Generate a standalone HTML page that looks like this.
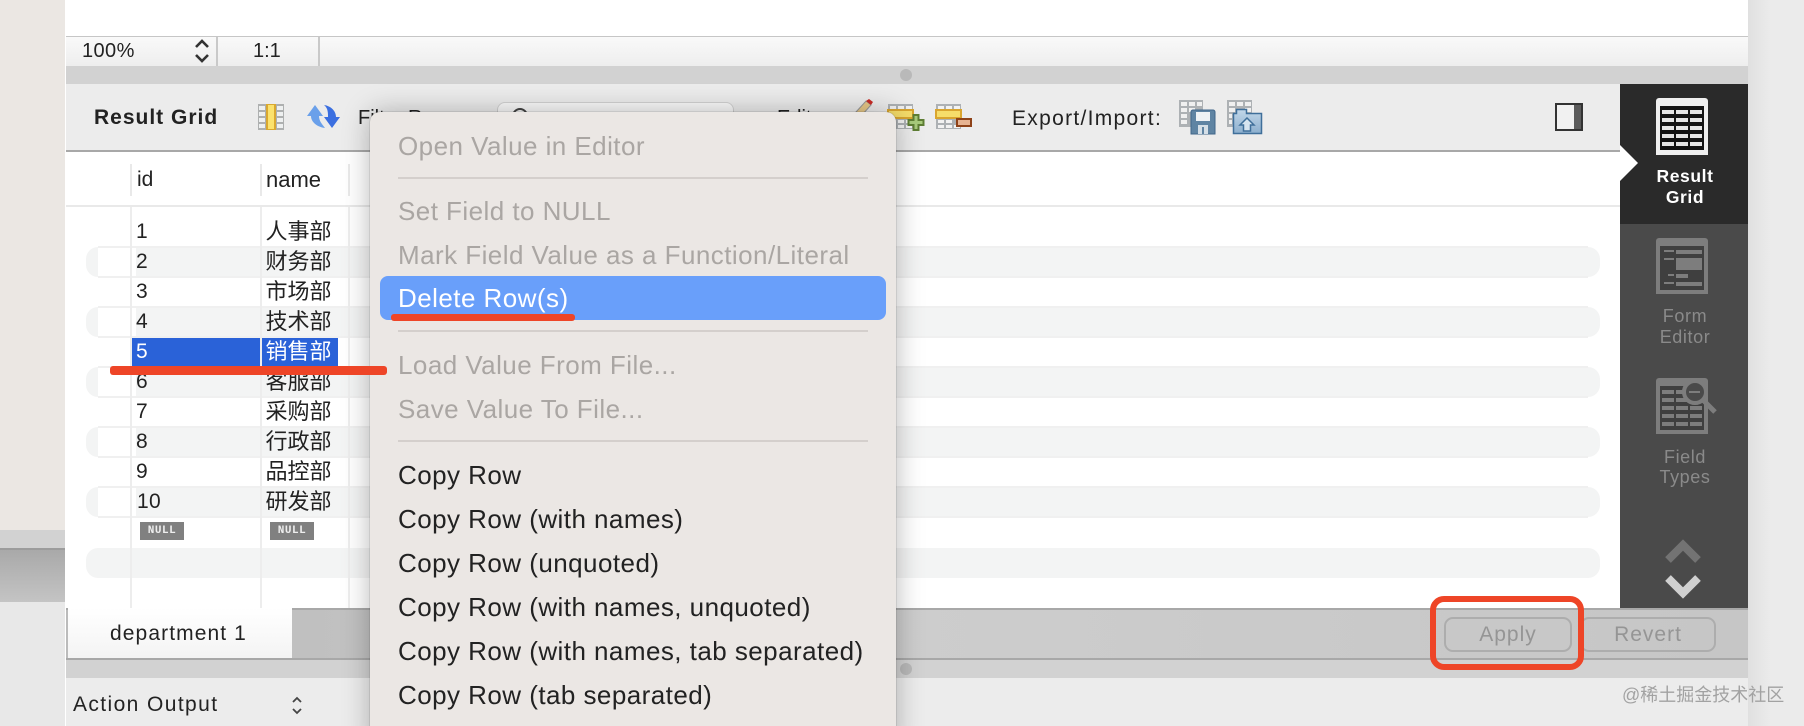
<!DOCTYPE html>
<html><head><meta charset="utf-8">
<style>
html,body{margin:0;padding:0;background:#fff}
#p{position:relative;width:1804px;height:726px;overflow:hidden;background:#fff;font-family:"Liberation Sans","Noto Sans CJK SC",sans-serif;color:#222}
#p div{position:absolute}
.t{white-space:nowrap;line-height:30px;height:30px}
.c{font-size:21px;letter-spacing:.3px}
.z{font-size:22px}
.st{left:86px;width:1514px;height:30px;background:#f3f4f4;border-radius:12px}
.ln{left:98px;width:1490px;height:2px;background:#f0f0f0}
.wb{left:98px;width:38px;height:30px;background:#fff}
.m{left:398px;font-size:26px;color:#222;letter-spacing:.45px}
.d{color:#aaa6a3}
.sp{left:398px;width:470px;height:2px;background:#d4cfcc}
.s{font-size:18px;line-height:20px;height:20px;text-align:center;left:1640px;width:90px;letter-spacing:.6px;color:#8a8a8a;white-space:nowrap}
.nl{width:44px;height:18px;top:522px;background:#808080;color:#eee;font:bold 11px/18px "Liberation Mono",monospace;text-align:center;letter-spacing:.5px}
</style></head><body><div id="p">
<!-- outer left -->
<div style="left:0;top:0;width:65px;height:530px;background:#ebe7e3"></div>
<div style="left:0;top:530px;width:65px;height:18px;background:#d2d2d2"></div>
<div style="left:0;top:548px;width:65px;height:54px;background:linear-gradient(#a9a9a9,#c4c4c4);border-top:2px solid #9c9c9c;box-sizing:border-box"></div>
<div style="left:0;top:602px;width:65px;height:124px;background:#e8e8e8"></div>
<!-- right -->
<div style="left:1748px;top:0;width:56px;height:726px;background:linear-gradient(90deg,#e0e0e0,#ebebeb 40%)"></div>
<!-- status -->
<div style="left:66px;top:36px;width:1682px;height:30px;background:linear-gradient(#f9f9f9,#eeeeee);border-top:1px solid #c6c6c6;box-sizing:border-box"></div>
<div class="t" style="left:82px;top:36px;font-size:20px;letter-spacing:.4px">100%</div>
<div style="left:216px;top:37px;width:2px;height:29px;background:#c9c9c9"></div>
<div style="left:318px;top:37px;width:2px;height:29px;background:#c9c9c9"></div>
<div class="t" style="left:253px;top:36px;font-size:20px">1:1</div>
<!-- band -->
<div style="left:66px;top:66px;width:1682px;height:18px;background:#d2d2d2"></div>
<div style="left:900px;top:69px;width:12px;height:12px;border-radius:50%;background:#b9b9b9"></div>
<!-- toolbar -->
<div style="left:66px;top:84px;width:1554px;height:68px;background:#ececec;border-bottom:2px solid #a8a8a8;box-sizing:border-box"></div>
<div class="t" style="left:94px;top:103px;font-size:21px;font-weight:bold;letter-spacing:1px">Result Grid</div>
<div class="t" style="left:358px;top:103px;font-size:20px">Filter Rows:</div>
<div style="left:497px;top:102px;width:237px;height:30px;background:#fbfbfb;border:1px solid #d2d2d2;border-radius:8px;box-sizing:border-box"></div>
<div class="t" style="left:777px;top:103px;font-size:20px">Edit:</div>
<div class="t" style="left:1012px;top:104px;font-size:21px;letter-spacing:1.3px">Export/Import:</div>
<!-- grid -->
<div style="left:66px;top:152px;width:1554px;height:456px;background:#fff"></div>
<div style="left:66px;top:205px;width:1554px;height:2px;background:#e9e9e9"></div>
<div class="st" style="top:247px"></div><div class="st" style="top:307px"></div><div class="st" style="top:367px"></div><div class="st" style="top:427px"></div><div class="st" style="top:487px"></div>
<div class="st" style="top:548px"></div>
<div class="ln" style="top:246px"></div><div class="ln" style="top:276px"></div>
<div class="ln" style="top:306px"></div><div class="ln" style="top:336px"></div>
<div class="ln" style="top:366px"></div><div class="ln" style="top:396px"></div>
<div class="ln" style="top:426px"></div><div class="ln" style="top:456px"></div>
<div class="ln" style="top:486px"></div><div class="ln" style="top:516px"></div>
<div class="wb" style="top:248px;height:28px"></div><div class="wb" style="top:308px;height:28px"></div><div class="wb" style="top:368px;height:28px"></div><div class="wb" style="top:428px;height:28px"></div><div class="wb" style="top:488px;height:28px"></div>
<div style="left:130px;top:164px;width:2px;height:32px;background:#e9e9e9"></div>
<div style="left:260px;top:164px;width:2px;height:32px;background:#e9e9e9"></div>
<div style="left:348px;top:164px;width:2px;height:32px;background:#e9e9e9"></div>
<div style="left:130px;top:207px;width:2px;height:401px;background:#ededed"></div>
<div style="left:260px;top:207px;width:2px;height:401px;background:#ededed"></div>
<div style="left:348px;top:207px;width:2px;height:401px;background:#ededed"></div>
<div class="t" style="left:137px;top:165px;font-size:21px">id</div>
<div class="t" style="left:266px;top:165px;font-size:22px">name</div>
<div style="left:132px;top:338px;width:128px;height:28px;background:#2a62d8"></div>
<div style="left:262px;top:338px;width:76px;height:28px;background:#2a62d8"></div>
<div class="t c" style="left:136px;top:217px">1</div><div class="t z" style="left:265.5px;top:217px">人事部</div>
<div class="t c" style="left:136px;top:247px">2</div><div class="t z" style="left:265.5px;top:247px">财务部</div>
<div class="t c" style="left:136px;top:277px">3</div><div class="t z" style="left:265.5px;top:277px">市场部</div>
<div class="t c" style="left:136px;top:307px">4</div><div class="t z" style="left:265.5px;top:307px">技术部</div>
<div class="t c" style="left:136px;top:337px;color:#fff">5</div><div class="t z" style="left:265.5px;top:337px;color:#fff">销售部</div>
<div class="t c" style="left:136px;top:367px">6</div><div class="t z" style="left:265.5px;top:367px">客服部</div>
<div class="t c" style="left:136px;top:397px">7</div><div class="t z" style="left:265.5px;top:397px">采购部</div>
<div class="t c" style="left:136px;top:427px">8</div><div class="t z" style="left:265.5px;top:427px">行政部</div>
<div class="t c" style="left:136px;top:457px">9</div><div class="t z" style="left:265.5px;top:457px">品控部</div>
<div class="t c" style="left:137px;top:487px">10</div><div class="t z" style="left:265.5px;top:487px">研发部</div>
<div class="nl" style="left:140px">NULL</div><div class="nl" style="left:270px">NULL</div>
<!-- tabs -->
<div style="left:66px;top:608px;width:1682px;height:52px;background:linear-gradient(90deg,#bbb,#cdcdcd 50%,#c6c6c6);border-top:2px solid #a8a8a8;border-bottom:2px solid #a8a8a8;box-sizing:border-box"></div>
<div style="left:68px;top:608px;width:224px;height:50px;background:linear-gradient(#fff,#f4f4f4)"></div>
<div class="t" style="left:110px;top:619px;font-size:21px;letter-spacing:1.1px">department 1</div>
<div style="left:1444px;top:617px;width:128px;height:35px;border:2px solid #adadad;border-radius:9px;box-sizing:border-box;text-align:center;font-size:21px;line-height:31px;color:#959595;letter-spacing:1px">Apply</div>
<div style="left:1580px;top:617px;width:136px;height:35px;border:2px solid #adadad;border-radius:9px;box-sizing:border-box;text-align:center;font-size:21px;line-height:31px;color:#959595;letter-spacing:1px">Revert</div>
<!-- lower -->
<div style="left:66px;top:660px;width:1682px;height:18px;background:#d2d2d2"></div>
<div style="left:900px;top:663px;width:12px;height:12px;border-radius:50%;background:#b9b9b9"></div>
<div style="left:66px;top:678px;width:1682px;height:48px;background:#ececec"></div>
<div class="t" style="left:73px;top:690px;font-size:21px;letter-spacing:1.4px">Action Output</div>
<!-- sidebar -->
<div style="left:1620px;top:84px;width:128px;height:140px;background:#2a2a2a"></div>
<div style="left:1620px;top:224px;width:128px;height:384px;background:#4a4a4a"></div>
<div class="s" style="top:166px;color:#fff;font-weight:bold;font-size:17.5px">Result</div>
<div class="s" style="top:187px;color:#fff;font-weight:bold;font-size:17.5px">Grid</div>
<div class="s" style="top:306px">Form</div>
<div class="s" style="top:327px">Editor</div>
<div class="s" style="top:447px">Field</div>
<div class="s" style="top:467px">Types</div>
<svg style="position:absolute;left:0;top:0" width="1804" height="726" viewBox="0 0 1804 726">
<defs><linearGradient id="fg" x1="0" y1="0" x2="0" y2="1"><stop offset="0" stop-color="#c2d7e9"/><stop offset="1" stop-color="#8cafce"/></linearGradient></defs>
<!-- stepper status -->
<path d="M196 47l6-6 6 6M196 55l6 6 6-6" fill="none" stroke="#333" stroke-width="2.6"/>
<!-- action stepper -->
<path d="M293 702l4-4 4 4M293 709l4 4 4-4" fill="none" stroke="#444" stroke-width="1.8"/>
<!-- column icon -->
<rect x="258" y="104" width="26" height="26" fill="#aeb0b0"/>
<g fill="#eef0f0"><rect x="259" y="106" width="6" height="4"/><rect x="259" y="112" width="6" height="4"/><rect x="259" y="118" width="6" height="4"/><rect x="259" y="124" width="6" height="4"/><rect x="277" y="106" width="6" height="4"/><rect x="277" y="112" width="6" height="4"/><rect x="277" y="118" width="6" height="4"/><rect x="277" y="124" width="6" height="4"/></g>
<rect x="266" y="104" width="10" height="26" fill="#d9a830"/><rect x="268" y="105" width="6" height="24" fill="#fbe26d"/>
<!-- refresh -->
<path d="M315 105L307 116h4c0 6 6 11 14 12-3-4-6-7-6-12h4z" fill="#6aa0ea"/>
<path d="M332 128l8-11h-4c0-6-5-11-12-12 4 3 4 8 4 12h-4z" fill="#3b6fe0"/>
<!-- search top -->
<circle cx="520" cy="116" r="7" fill="none" stroke="#444" stroke-width="2"/>
<!-- pencil -->
<path d="M856 112l10-11 5 4-9 10z" fill="#e9c988" stroke="#999"/><path d="M866 101l3-2 4 3-2 3z" fill="#c92b25"/>
<!-- add row -->
<g><rect x="888" y="104" width="25" height="25" fill="#adb1b4"/><g fill="#f2f2f2"><rect x="890" y="106" width="6" height="3"/><rect x="898" y="106" width="6" height="3"/><rect x="906" y="106" width="6" height="3"/><rect x="890" y="120" width="6" height="3"/><rect x="898" y="120" width="6" height="3"/><rect x="906" y="120" width="6" height="3"/><rect x="890" y="125" width="6" height="3"/><rect x="898" y="125" width="6" height="3"/><rect x="906" y="125" width="6" height="3"/></g><rect x="888" y="110" width="25" height="8" fill="#f6dd6a" stroke="#d9a52f" stroke-width="2"/><path d="M913.5 115h5v5h5v5h-5v5h-5v-5h-5v-5h5z" fill="#a8cb7c" stroke="#5e7e34" stroke-width="2"/></g>
<g><rect x="936" y="104" width="25" height="25" fill="#adb1b4"/><g fill="#f2f2f2"><rect x="938" y="106" width="6" height="3"/><rect x="946" y="106" width="6" height="3"/><rect x="954" y="106" width="6" height="3"/><rect x="938" y="120" width="6" height="3"/><rect x="946" y="120" width="6" height="3"/><rect x="938" y="125" width="6" height="3"/><rect x="946" y="125" width="6" height="3"/><rect x="954" y="125" width="6" height="3"/></g><rect x="936" y="110" width="25" height="8" fill="#f6dd6a" stroke="#d9a52f" stroke-width="2"/><rect x="957" y="119" width="14" height="7" fill="#e7b391" stroke="#8e4218" stroke-width="2"/></g>
<!-- export -->
<g><rect x="1179" y="100" width="24" height="27" fill="#adb1b4"/><g fill="#f0f0f0"><rect x="1181" y="102" width="6" height="4"/><rect x="1189" y="102" width="6" height="4"/><rect x="1197" y="102" width="5" height="4"/><rect x="1181" y="108" width="6" height="4"/><rect x="1189" y="108" width="6" height="4"/><rect x="1181" y="114" width="6" height="4"/><rect x="1181" y="120" width="6" height="4"/></g><path d="M1191 112a2 2 0 0 1 2-2h20a2 2 0 0 1 2 2v22h-24z" fill="#5f84a3" stroke="#41668a"/><rect x="1196" y="112" width="14" height="9" fill="#eef2f5"/><rect x="1198" y="125" width="10" height="9" fill="#d5dfe7"/><rect x="1202" y="127" width="2" height="7" fill="#5f84a3"/></g>
<g><rect x="1227" y="100" width="25" height="27" fill="#adb1b4"/><g fill="#f0f0f0"><rect x="1229" y="102" width="6" height="4"/><rect x="1237" y="102" width="6" height="4"/><rect x="1245" y="102" width="6" height="4"/><rect x="1229" y="108" width="6" height="4"/><rect x="1245" y="108" width="6" height="4"/><rect x="1229" y="114" width="3" height="4"/><rect x="1229" y="120" width="3" height="4"/></g><path d="M1233.5 113.500h3v-4h10v4h15v20h-28z" fill="url(#fg)" stroke="#3f6f9a" stroke-width="1.500"/><path d="M1247 118l-7 7h3.500v6h7v-6h3.500z" fill="#d6e4f0" stroke="#3f6f9a" stroke-width="1.500"/></g>
<!-- toggle -->
<rect x="1556" y="104" width="26" height="26" fill="#f1f1f1" stroke="#333" stroke-width="2"/><rect x="1574" y="105" width="7" height="24" fill="#5b5b5b"/>
<!-- arrow -->
<path d="M1620 145l18 18-18 18z" fill="#fff"/>
<!-- result icon -->
<path d="M1656 101a3 3 0 0 1 3-3h46a3 3 0 0 1 3 3v54h-52z" fill="#efefef"/>
<rect x="1660" y="106" width="44" height="44" fill="#141414"/>
<g fill="#e6e6e6"><rect x="1662" y="110" width="12" height="4"/><rect x="1676" y="110" width="12" height="4"/><rect x="1690" y="110" width="12" height="4"/><rect x="1662" y="118" width="12" height="4"/><rect x="1676" y="118" width="12" height="4"/><rect x="1690" y="118" width="12" height="4"/><rect x="1662" y="126" width="12" height="4"/><rect x="1676" y="126" width="12" height="4"/><rect x="1690" y="126" width="12" height="4"/><rect x="1662" y="134" width="12" height="4"/><rect x="1676" y="134" width="12" height="4"/><rect x="1690" y="134" width="12" height="4"/><rect x="1662" y="142" width="12" height="4"/><rect x="1676" y="142" width="12" height="4"/><rect x="1690" y="142" width="12" height="4"/></g>
<!-- form icon -->
<path d="M1656 241a3 3 0 0 1 3-3h46a3 3 0 0 1 3 3v53h-52z" fill="#7d7d7d"/>
<rect x="1660" y="246" width="44" height="44" fill="#3f3f3f"/>
<g fill="#7d7d7d"><rect x="1664" y="250" width="10" height="2"/><rect x="1676" y="250" width="26" height="4"/><rect x="1664" y="258" width="10" height="2"/><rect x="1676" y="258" width="26" height="12"/><rect x="1668" y="274" width="6" height="2"/><rect x="1676" y="274" width="12" height="4"/><rect x="1664" y="282" width="10" height="2"/><rect x="1676" y="282" width="26" height="4"/></g>
<!-- field icon -->
<path d="M1656 381a3 3 0 0 1 3-3h46a3 3 0 0 1 3 3v53h-52z" fill="#7d7d7d"/>
<rect x="1660" y="386" width="44" height="44" fill="#3f3f3f"/>
<g fill="#7d7d7d"><rect x="1662" y="390" width="12" height="4"/><rect x="1676" y="390" width="12" height="4"/><rect x="1662" y="398" width="12" height="4"/><rect x="1676" y="398" width="12" height="4"/><rect x="1662" y="406" width="12" height="4"/><rect x="1676" y="406" width="12" height="4"/><rect x="1690" y="406" width="12" height="4"/><rect x="1662" y="414" width="12" height="4"/><rect x="1676" y="414" width="12" height="4"/><rect x="1690" y="414" width="12" height="4"/><rect x="1662" y="422" width="12" height="4"/><rect x="1676" y="422" width="12" height="4"/><rect x="1690" y="422" width="12" height="4"/></g>
<circle cx="1695" cy="392" r="11" fill="#4a4a4a" stroke="#7d7d7d" stroke-width="4"/><rect x="1689" y="391" width="11" height="2" fill="#7d7d7d"/>
<path d="M1703 400l12 12" stroke="#7d7d7d" stroke-width="5"/>
<!-- chevrons -->
<path d="M1668 560l15-15 15 15" fill="none" stroke="#737373" stroke-width="8"/>
<path d="M1668 578l15 15 15-15" fill="none" stroke="#d0d0d0" stroke-width="8"/>
</svg>
<!-- menu -->
<div style="left:370px;top:112px;width:526px;height:640px;background:#ebe7e4;border-radius:10px;box-shadow:0 0 28px rgba(0,0,0,.28),0 0 1px rgba(0,0,0,.5)">
</div>
<div class="t m d" style="top:131px">Open Value in Editor</div>
<div class="sp" style="top:177px"></div>
<div class="t m d" style="top:196px">Set Field to NULL</div>
<div class="t m d" style="top:240px">Mark Field Value as a Function/Literal</div>
<div style="left:380px;top:276px;width:506px;height:44px;background:#699ffa;border-radius:8px"></div>
<div class="t m" style="top:283px;color:#fff">Delete Row(s)</div>
<div class="sp" style="top:330px"></div>
<div class="t m d" style="top:350px">Load Value From File...</div>
<div class="t m d" style="top:394px">Save Value To File...</div>
<div class="sp" style="top:440px"></div>
<div class="t m" style="top:460px">Copy Row</div>
<div class="t m" style="top:504px">Copy Row (with names)</div>
<div class="t m" style="top:548px">Copy Row (unquoted)</div>
<div class="t m" style="top:592px">Copy Row (with names, unquoted)</div>
<div class="t m" style="top:636px">Copy Row (with names, tab separated)</div>
<div class="t m" style="top:680px">Copy Row (tab separated)</div>
<!-- annotations -->
<div style="left:391px;top:314px;width:184px;height:7px;background:#ee4527;border-radius:3px"></div>
<div style="left:110px;top:366px;width:277px;height:9px;background:#ee4527;border-radius:3px"></div>
<div style="left:1430px;top:596px;width:154px;height:74px;border:6px solid #ee4527;border-radius:14px;box-sizing:border-box"></div>
<div class="t" style="left:1622px;top:680px;font-size:18px;color:#a2a2a2">@稀土掘金技术社区</div>
</div></body></html>
